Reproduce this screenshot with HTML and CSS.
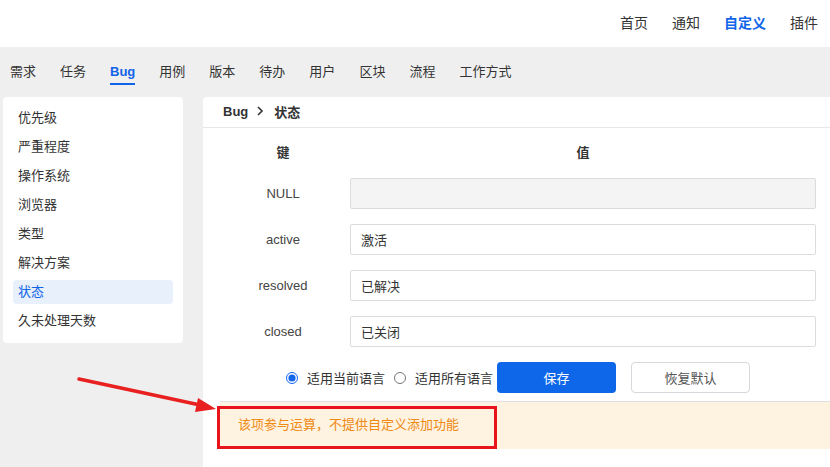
FILE: index.html
```html
<!DOCTYPE html>
<html>
<head>
    <link rel="stylesheet" href="styles.css">
</head>
<body>
    <div class="top-bar">
        <a class="top-link">首页</a>
        <a class="top-link">通知</a>
        <a class="top-link active">自定义</a>
        <a class="top-link">插件</a>
    </div>

    <div class="tab-bar">
        <a class="tab">需求</a>
        <a class="tab">任务</a>
        <a class="tab active">Bug</a>
        <a class="tab">用例</a>
        <a class="tab">版本</a>
        <a class="tab">待办</a>
        <a class="tab">用户</a>
        <a class="tab">区块</a>
        <a class="tab">流程</a>
        <a class="tab">工作方式</a>
    </div>

    <div class="main">
        <div class="side-menu">
            <a class="side-item">优先级</a>
            <a class="side-item">严重程度</a>
            <a class="side-item">操作系统</a>
            <a class="side-item">浏览器</a>
            <a class="side-item">类型</a>
            <a class="side-item">解决方案</a>
            <a class="side-item active">状态</a>
            <a class="side-item">久未处理天数</a>
        </div>

        <div class="panel">
            <div class="panel-header">
                <span>Bug</span>
                <svg class="crumb-arrow" width="8" height="10" viewBox="0 0 8 10">
                    <path d="M2 1 L6 5 L2 9" fill="none" stroke="#333" stroke-width="1.6"/>
                </svg>
                <span>状态</span>
            </div>

            <div class="lang-table">
                <div class="th">键</div>
                <div class="th">值</div>

                <div class="key">NULL</div>
                <input class="value" type="text" value="" disabled>

                <div class="key">active</div>
                <input class="value" type="text" value="激活">

                <div class="key">resolved</div>
                <input class="value" type="text" value="已解决">

                <div class="key">closed</div>
                <input class="value" type="text" value="已关闭">
            </div>

            <div class="actions">
                <label class="radio"><input type="radio" name="lang" checked>适用当前语言</label>
                <label class="radio second"><input type="radio" name="lang">适用所有语言</label>
                <button class="btn btn-primary">保存</button>
                <button class="btn btn-default">恢复默认</button>
            </div>

            <div class="notice">
                该项参与运算，不提供自定义添加功能
                <div class="mark-box"></div>
            </div>
        </div>
    </div>

    <!-- annotation arrow pointing at the notice -->
    <svg class="mark-arrow" width="830" height="467" viewBox="0 0 830 467">
        <line x1="79" y1="379" x2="200" y2="405" stroke="#e8201f" stroke-width="3.5" stroke-linecap="round"/>
        <polygon points="216,409 198,398 195,412" fill="#e8201f"/>
    </svg>
</body>
</html>
```

FILE: styles.css
```css
* {
    box-sizing: border-box;
}

body {
    margin: 0;
    background-color: #efefef;
    font-family: "Liberation Sans", "Noto Sans CJK SC", sans-serif;
    font-size: 13px;
    color: #333;
    overflow: hidden;
}

a {
    cursor: pointer;
}

/* Top navigation */
.top-bar {
    height: 47px;
    background-color: white;
    display: flex;
    justify-content: flex-end;
    align-items: center;
    gap: 24px;
    padding-right: 12px;
    padding-bottom: 3px;
    font-size: 14px;
}

.top-link {
    color: #333;
}

.top-link.active {
    color: #0f64e8;
    font-weight: bold;
}

/* Tabs */
.tab-bar {
    height: 50px;
    display: flex;
    align-items: flex-start;
    gap: 24px;
    padding: 15px 0 0 10px;
}

.tab {
    line-height: 20px;
    padding-bottom: 1px;
    border-bottom: 2px solid transparent;
    color: #333;
}

.tab.active {
    color: #0f64e8;
    font-weight: bold;
    border-bottom-color: #0f64e8;
}

/* Layout */
.main {
    display: flex;
    gap: 20px;
    padding-left: 3px;
    height: calc(100vh - 97px);
}

.side-menu {
    width: 180px;
    align-self: flex-start;
    background-color: white;
    border-radius: 4px;
    padding: 9px 10px 10px;
    display: flex;
    flex-direction: column;
    gap: 5px;
}

.side-item {
    height: 24px;
    line-height: 24px;
    padding-left: 5px;
    border-radius: 4px;
    color: #333;
}

.side-item.active {
    background-color: #e8f0fb;
    color: #0f64e8;
}

.panel {
    flex: 1;
    background-color: white;
    border-top-left-radius: 4px;
    position: relative;
}

.panel-header {
    height: 31px;
    border-bottom: 1px solid #e8e8e8;
    padding-left: 20px;
    display: flex;
    align-items: center;
    gap: 8px;
    font-weight: bold;
    padding-bottom: 2px;
}

.crumb-arrow {
    margin-right: 2px;
}

/* Key / value table */
.lang-table {
    display: grid;
    grid-template-columns: 120px 1fr;
    column-gap: 7px;
    row-gap: 15px;
    padding: 15px 14px 0 20px;
    align-items: center;
}

.th {
    text-align: center;
    font-weight: bold;
    line-height: 20px;
}

.key {
    text-align: center;
    color: #444;
    padding-bottom: 1px;
}

.value {
    height: 31px;
    border: 1px solid #dcdcdc;
    border-radius: 2px;
    padding: 0 10px;
    font-family: inherit;
    font-size: 13px;
    color: #333;
    outline: none;
}

.value:disabled {
    background-color: #f4f4f4;
}

/* Actions */
.actions {
    display: flex;
    justify-content: center;
    align-items: center;
    margin-top: 15px;
    height: 31px;
    padding-left: 3px;
}

.radio {
    display: flex;
    align-items: center;
    gap: 9px;
    color: #333;
}

.radio input {
    margin: 0;
    width: 12px;
    height: 12px;
    accent-color: #1565e8;
}

.radio.second {
    margin-left: 9px;
    margin-right: 4px;
}

.btn {
    width: 119px;
    height: 31px;
    border-radius: 4px;
    font-family: inherit;
    font-size: 13px;
    cursor: pointer;
}

.btn-primary {
    background-color: #0e66e9;
    border: none;
    color: white;
}

.btn-default {
    margin-left: 15px;
    background-color: white;
    border: 1px solid #d5d8dd;
    color: #555;
}

/* Notice */
.notice {
    position: relative;
    margin: 8px 0 0 17px;
    height: 48px;
    border-top: 1px solid #e0e0e0;
    background-color: #fef2e0;
    color: #ef8a14;
    padding-left: 18px;
    line-height: 46px;
}

.mark-box {
    position: absolute;
    left: -3px;
    top: 4px;
    width: 280px;
    height: 43px;
    border: 3px solid #e8141c;
}

.mark-arrow {
    position: absolute;
    top: 0;
    left: 0;
    pointer-events: none;
}
```
